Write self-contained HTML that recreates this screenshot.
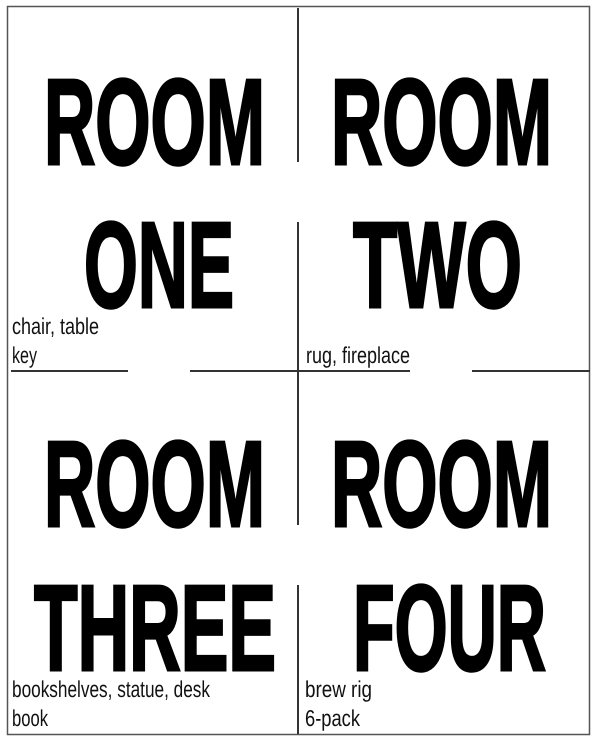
<!DOCTYPE html>
<html><head><meta charset="utf-8"><style>
html,body{margin:0;padding:0;background:#fff;width:595px;height:739px;overflow:hidden}
svg{display:block}
.b{font-family:"Liberation Sans",sans-serif;font-weight:bold;font-size:122px;fill:#000;stroke:#000;stroke-width:3;stroke-linejoin:miter}
.s{font-family:"Liberation Sans",sans-serif;font-size:23px;fill:#111}
</style></head><body>
<svg width="595" height="739" viewBox="0 0 595 739" text-rendering="geometricPrecision">
<rect x="7.5" y="6.5" width="582" height="728" fill="none" stroke="#555" stroke-width="1.5"/>
<g stroke="#333" stroke-width="2">
<line x1="298" y1="8" x2="298" y2="162"/>
<line x1="298" y1="222" x2="298" y2="525"/>
<line x1="298" y1="585" x2="298" y2="734"/>
<line x1="11" y1="371" x2="128" y2="371"/>
<line x1="190" y1="371" x2="410" y2="371"/>
<line x1="472" y1="371" x2="590" y2="371"/>
</g>
<text class="b" x="44" y="164" textLength="221" lengthAdjust="spacingAndGlyphs">ROOM</text>
<text class="b" x="84" y="307" textLength="150" lengthAdjust="spacingAndGlyphs">ONE</text>
<text class="b" x="331" y="164" textLength="221" lengthAdjust="spacingAndGlyphs">ROOM</text>
<text class="b" x="353" y="307" textLength="169" lengthAdjust="spacingAndGlyphs">TWO</text>
<text class="b" x="44" y="526" textLength="221" lengthAdjust="spacingAndGlyphs">ROOM</text>
<text class="b" x="34" y="670" textLength="242" lengthAdjust="spacingAndGlyphs">THREE</text>
<text class="b" x="331" y="526" textLength="221" lengthAdjust="spacingAndGlyphs">ROOM</text>
<text class="b" x="353" y="670" textLength="193" lengthAdjust="spacingAndGlyphs">FOUR</text>
<text class="s" x="12" y="334" textLength="87" lengthAdjust="spacingAndGlyphs">chair, table</text>
<text class="s" x="12" y="363" textLength="25" lengthAdjust="spacingAndGlyphs">key</text>
<text class="s" x="306" y="363" textLength="104" lengthAdjust="spacingAndGlyphs">rug, fireplace</text>
<text class="s" x="12" y="697" textLength="198" lengthAdjust="spacingAndGlyphs">bookshelves, statue, desk</text>
<text class="s" x="12" y="726" textLength="36" lengthAdjust="spacingAndGlyphs">book</text>
<text class="s" x="305" y="697" textLength="67" lengthAdjust="spacingAndGlyphs">brew rig</text>
<text class="s" x="305" y="726" textLength="55" lengthAdjust="spacingAndGlyphs">6-pack</text>
</svg>
</body></html>
